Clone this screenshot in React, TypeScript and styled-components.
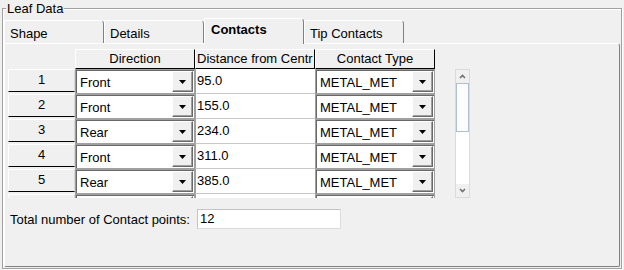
import React from 'react';
import styled, { createGlobalStyle } from 'styled-components';

const Global = createGlobalStyle`
  html, body { margin: 0; padding: 0; background: #f0f0f0; }
  body { font-family: "Liberation Sans", Arial, sans-serif; font-size: 13px; color: #000; }
  * { box-sizing: border-box; }
`;

const Window = styled.div`
  width: 624px;
  height: 270px;
  padding: 8px 2px 1px 2px;
  display: flex;
  overflow: hidden;
`;

const GroupBox = styled.div`
  position: relative;
  flex: 1;
  border: 1px solid #a0a0a0;
  box-shadow: inset 1px 1px 0 #fff, 1px 1px 0 #fff;
  padding: 11px 1px 1px 1px;
  display: flex;
  flex-direction: column;
`;

const Legend = styled.span`
  position: absolute;
  top: -8px;
  left: 3px;
  padding: 0 1px;
  background: #f0f0f0;
  line-height: 15px;
`;

const TabBar = styled.div`
  display: flex;
  height: 23px;
  align-items: flex-end;
`;

const Tab = styled.div<{ $active?: boolean }>`
  position: relative;
  z-index: ${(p) => (p.$active ? 1 : 0)};
  width: 100px;
  height: ${(p) => (p.$active ? '26px' : '23px')};
  margin-bottom: ${(p) => (p.$active ? '-1px' : '0')};
  background: #f0f0f0;
  border-top: 1px solid #fff;
  border-left: 1px solid #fff;
  border-right: 1px solid #808080;
  border-top-right-radius: 4px;
  padding: ${(p) => (p.$active ? '3px 0 0 6px' : '5px 0 0 5px')};
  font-weight: ${(p) => (p.$active ? 'bold' : 'normal')};
  line-height: 15px;
  white-space: nowrap;
`;

const Panel = styled.div`
  flex: 1;
  border-top: 1px solid #fff;
  border-left: 1px solid #fff;
  border-right: 1px solid #808080;
  border-bottom: 1px solid #808080;
  border-top-right-radius: 3px;
  border-bottom-left-radius: 2px;
  border-bottom-right-radius: 2px;
  padding: 5px 0 0 3px;
  display: flex;
  flex-direction: column;
`;

const TableArea = styled.div`
  display: flex;
  align-items: flex-start;
`;

const Table = styled.div`
  width: 427px;
  display: flex;
  flex-direction: column;
`;

const Cols = styled.div`
  display: grid;
  grid-template-columns: 67px 120px 120px 120px;
`;

const HeaderRow = styled(Cols)`
  height: 20px;
`;

const Corner = styled.div``;

const HeaderCell = styled.div<{ $align?: string }>`
  border-top: 1px solid #fff;
  border-left: 1px solid #fff;
  border-right: 1px solid #000;
  border-bottom: 1px solid #000;
  line-height: 17px;
  text-align: ${(p) => p.$align || 'center'};
  padding-left: ${(p) => (p.$align === 'left' ? '1px' : '0')};
  overflow: hidden;
  white-space: nowrap;
`;

const Viewport = styled.div`
  height: 129px;
  overflow: hidden;
`;

const Row = styled(Cols)`
  height: 25px;
`;

const RowHeader = styled.div`
  height: 23px;
  border-top: 1px solid #fff;
  border-left: 1px solid #fff;
  border-right: 1px solid #d8d8d8;
  border-bottom: 1px solid #000;
  text-align: center;
  line-height: 20px;
`;

const Combo = styled.div`
  height: 25px;
  display: flex;
  align-items: stretch;
  border: 1px solid #a0a0a0;
  box-shadow: inset 1px 1px 0 #696969;
  background: #fff;
  padding: 1px;
`;

const ComboText = styled.div`
  flex: 1;
  padding: 0 0 0 3px;
  line-height: 23px;
  white-space: nowrap;
  overflow: hidden;
`;

const ComboButton = styled.div`
  width: 21px;
  display: flex;
  align-items: center;
  justify-content: center;
  background: #f0f0f0;
  border-top: 1px solid #fff;
  border-left: 1px solid #fff;
  border-right: 1px solid #696969;
  border-bottom: 1px solid #696969;
  box-shadow: inset -1px -1px 0 #a0a0a0;
`;

const ValueCell = styled.div`
  height: 25px;
  background: #fff;
  border-left: 1px solid #a0a0a0;
  border-bottom: 1px solid #c8c8c8;
  padding-left: 1px;
  line-height: 24px;
`;

const ScrollColumn = styled.div`
  margin-left: 20px;
  padding-top: 20px;
`;

const ScrollBar = styled.div`
  width: 15px;
  height: 129px;
  border: 1px solid #dadada;
  background: #fff;
  display: flex;
  flex-direction: column;
`;

const ScrollArrow = styled.div`
  height: 13px;
  display: flex;
  align-items: center;
  justify-content: center;
  background: #f0f0f0;
`;

const Thumb = styled.div`
  height: 49px;
  border: 1px solid #aebfd0;
  background: #fcfcfc;
`;

const Track = styled.div`
  flex: 1;
  background: #fff;
`;

const TotalRow = styled.div`
  margin-top: 11px;
  display: flex;
  align-items: center;
  height: 20px;
`;

const Label = styled.span`
  padding-left: 2px;
  width: 189px;
  white-space: nowrap;
`;

const Input = styled.div`
  width: 144px;
  height: 20px;
  background: #fff;
  border: 1px solid #c4c4c4;
  border-right-color: #dcdcdc;
  border-bottom-color: #dcdcdc;
  padding-left: 2px;
  line-height: 18px;
`;

const Arrow = () => (
  <svg width="7" height="4" viewBox="0 0 7 4">
    <polygon points="0,0 7,0 3.5,4" fill="#000" />
  </svg>
);

const Chevron = ({ up }: { up?: boolean }) => (
  <svg width="7" height="5" viewBox="0 0 7 5">
    <polyline
      points={up ? '1,4 3.5,1.5 6,4' : '1,1 3.5,3.5 6,1'}
      fill="none"
      stroke="#707070"
      strokeWidth="1.6"
    />
  </svg>
);

const rows = [
  { n: '1', dir: 'Front', dist: '95.0', type: 'METAL_MET' },
  { n: '2', dir: 'Front', dist: '155.0', type: 'METAL_MET' },
  { n: '3', dir: 'Rear', dist: '234.0', type: 'METAL_MET' },
  { n: '4', dir: 'Front', dist: '311.0', type: 'METAL_MET' },
  { n: '5', dir: 'Rear', dist: '385.0', type: 'METAL_MET' },
  { n: '', dir: '', dist: '', type: '' },
];

const ComboBox = ({ value }: { value: string }) => (
  <Combo>
    <ComboText>{value}</ComboText>
    <ComboButton>
      <Arrow />
    </ComboButton>
  </Combo>
);

export default function App() {
  return (
    <>
      <Global />
      <Window>
        <GroupBox>
          <Legend>Leaf Data</Legend>
          <TabBar>
            <Tab>Shape</Tab>
            <Tab>Details</Tab>
            <Tab $active>Contacts</Tab>
            <Tab>Tip Contacts</Tab>
          </TabBar>
          <Panel>
            <TableArea>
              <Table>
                <HeaderRow>
                  <Corner />
                  <HeaderCell>Direction</HeaderCell>
                  <HeaderCell $align="left">Distance from Centr</HeaderCell>
                  <HeaderCell>Contact Type</HeaderCell>
                </HeaderRow>
                <Viewport>
                  {rows.map((r, i) => (
                    <Row key={i}>
                      <RowHeader>{r.n}</RowHeader>
                      <ComboBox value={r.dir} />
                      <ValueCell>{r.dist}</ValueCell>
                      <ComboBox value={r.type} />
                    </Row>
                  ))}
                </Viewport>
              </Table>
              <ScrollColumn>
                <ScrollBar>
                  <ScrollArrow>
                    <Chevron up />
                  </ScrollArrow>
                  <Thumb />
                  <Track />
                  <ScrollArrow>
                    <Chevron />
                  </ScrollArrow>
                </ScrollBar>
              </ScrollColumn>
            </TableArea>
            <TotalRow>
              <Label>Total number of Contact points:</Label>
              <Input>12</Input>
            </TotalRow>
          </Panel>
        </GroupBox>
      </Window>
    </>
  );
}
